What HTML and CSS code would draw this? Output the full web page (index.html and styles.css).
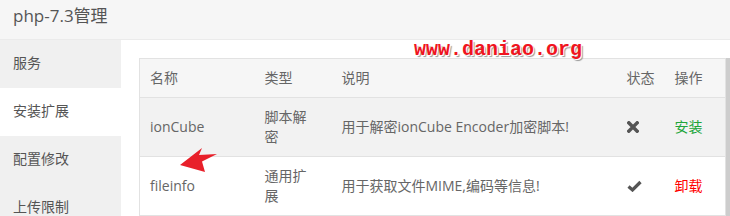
FILE: index.html
```html
<!DOCTYPE html>
<html>
<head>
<meta charset="utf-8">
<link rel="stylesheet" href="styles.css">
</head>
<body>
<div class="title">php-7.3管理</div>
<div class="layout">
  <ul class="side">
    <li>服务</li>
    <li class="active">安装扩展</li>
    <li>配置修改</li>
    <li>上传限制</li>
  </ul>
  <div class="main">
    <table class="tbl">
      <colgroup>
        <col class="c1"><col class="c2"><col class="c3"><col class="c4"><col class="c5">
      </colgroup>
      <thead>
        <tr><th>名称</th><th>类型</th><th>说明</th><th>状态</th><th>操作</th></tr>
      </thead>
      <tbody>
        <tr class="hover"><td>ionCube</td><td class="type">脚本解密</td><td>用于解密ionCube Encoder加密脚本!</td><td><svg class="ico" width="12" height="12" viewBox="0 0 12 12"><path d="M1.8 1.8 L10.2 10.2 M10.2 1.8 L1.8 10.2" stroke="#555" stroke-width="3.4" stroke-linecap="square"/></svg></td><td><a class="install">安装</a></td></tr>
        <tr><td>fileinfo</td><td class="type">通用扩展</td><td>用于获取文件MIME,编码等信息!</td><td><svg class="ico" width="15" height="12" viewBox="0 0 15 12"><path d="M1.5 6.5 L5.5 10 L13.5 2" fill="none" stroke="#555" stroke-width="3.2" stroke-linejoin="miter"/></svg></td><td><a class="remove">卸载</a></td></tr>
      </tbody>
    </table>
    <div class="scroll"></div>
  </div>
</div>
<div class="mark">www.daniao.org</div>
<svg class="arrow" width="42" height="28" viewBox="0 0 42 28"><path d="M2 19 L24 2 L21 9 L39 8 L24 15.5 L27 26 Z" fill="#e8202a"/></svg>
</body>
</html>
```
FILE: styles.css
```css
* { box-sizing: border-box; }
html, body { height: 216px; }
body {
  margin: 0;
  font-family: "Open Sans", "Noto Sans CJK SC", sans-serif;
  font-size: 14px;
  color: #666;
  background: #fff;
  overflow: hidden;
}
.title {
  height: 40px;
  background: #f6f6f6;
  border-bottom: 1px solid #ebebeb;
  padding-left: 13px;
  font-size: 17px;
  line-height: 32px;
  color: #555;
}
.layout { display: flex; }
.side {
  list-style: none;
  margin: 0;
  padding: 0;
  width: 121px;
  flex: none;
}
.side li {
  height: 48px;
  line-height: 46px;
  padding-left: 13px;
  background: #f0f0f0;
  color: #555;
}
.side li.active { background: #fff; }
.main {
  flex: 1;
  display: flex;
  align-items: flex-start;
  padding: 18px 0 0 18px;
}
.tbl {
  width: 586px;
  border-collapse: collapse;
  table-layout: fixed;
  border: 1px solid #e2e2e2;
}
.c1 { width: 115px; }
.c2 { width: 77px; }
.c3 { width: 285px; }
.c4 { width: 48px; }
.c5 { width: 61px; }
.tbl th, .tbl td {
  text-align: left;
  font-weight: normal;
  padding: 9px 10px;
  line-height: 20px;
  vertical-align: middle;
}
.tbl td.type { padding-right: 16px; }
.tbl thead tr { background: #f6f6f6; }
.tbl th { height: 38px; }
.tbl tbody tr { border-top: 1px solid #e2e2e2; }
.tbl tbody tr.hover { background: #f2f2f2; }
.tbl td { height: 59px; }
.ico { display: block; }
.install { color: #20a53a; }
.remove { color: #ff0000; }
.scroll {
  width: 6px;
  height: 160px;
  background: #cdcdcd;
  flex: none;
}
.mark {
  position: absolute;
  left: 414px;
  top: 38px;
  font-family: "Liberation Mono", monospace;
  font-weight: bold;
  font-size: 20px;
  color: #f0141e;
  text-shadow: 1px 1px 0 #fff, 2px 2px 1px #999;
}
.arrow {
  position: absolute;
  left: 178px;
  top: 146px;
}
```
